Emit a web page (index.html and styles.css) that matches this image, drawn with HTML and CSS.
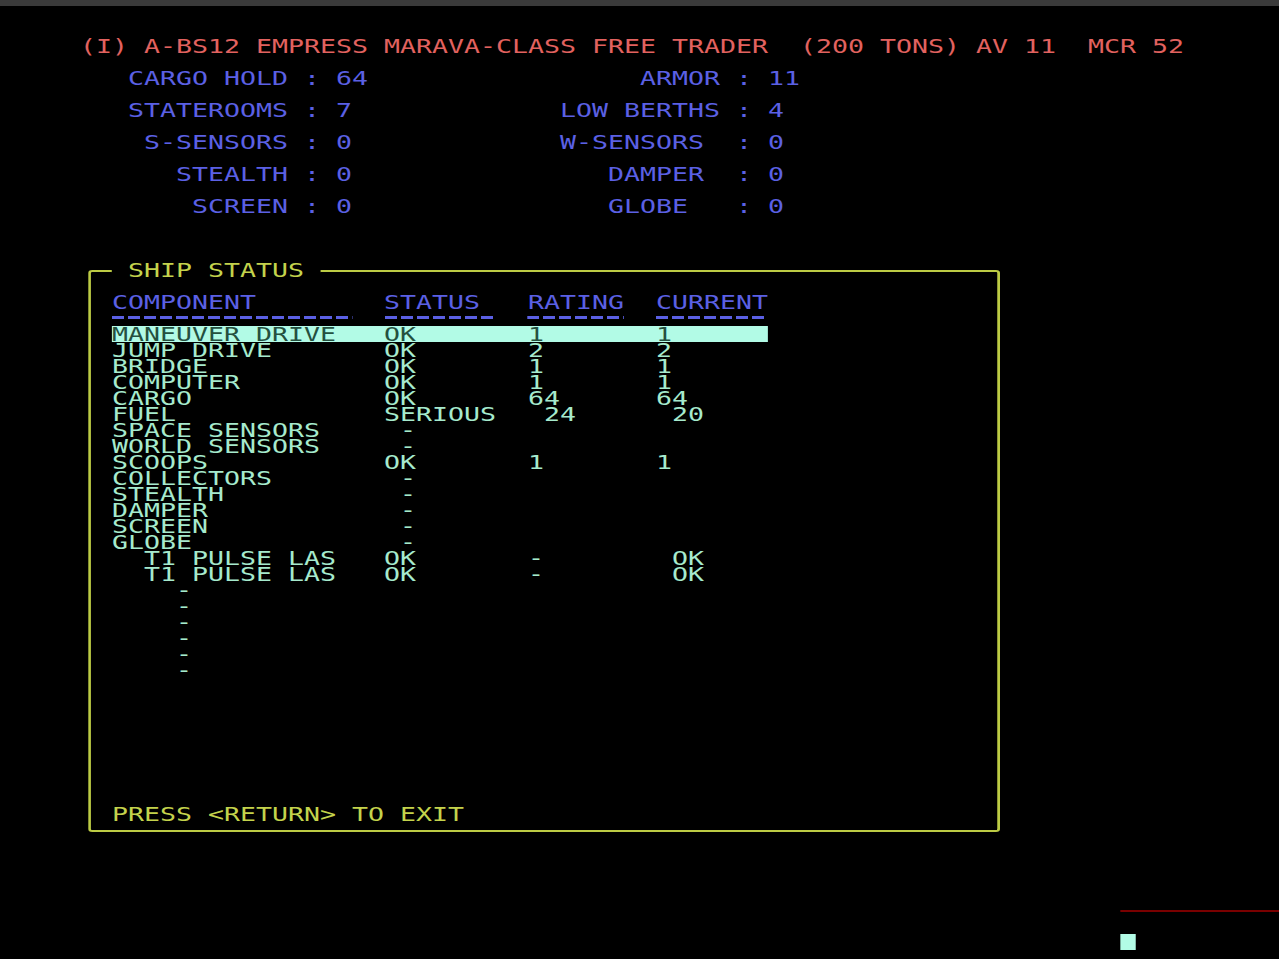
FILE: index.html
```html
<!DOCTYPE html>
<html lang="en">
<head>
<meta charset="utf-8">
<title>Ship Status</title>
<link rel="stylesheet" href="styles.css">
</head>
<body>
<div class="topbar"></div>
<main class="crt">
  <div class="line title">     (I) A-BS12 EMPRESS MARAVA-CLASS FREE TRADER  (200 TONS) AV 11  MCR 52</div>
  <section class="stats">
    <div class="line">        CARGO HOLD : 64                 ARMOR : 11</div>
    <div class="line">        STATEROOMS : 7             LOW BERTHS : 4</div>
    <div class="line">         S-SENSORS : 0             W-SENSORS  : 0</div>
    <div class="line">           STEALTH : 0                DAMPER  : 0</div>
    <div class="line">            SCREEN : 0                GLOBE   : 0</div>
  </section>

  <section class="box">
    <div class="box-head"><span class="box-title">SHIP STATUS</span></div>
    <div class="box-body">
      <div class="tbl">
        <div class="tr th"><span>COMPONENT</span><span>STATUS</span><span>RATING</span><span>CURRENT</span></div>
        <div class="tr rules"><span class="rule w15"></span><span class="rule w7"></span><span class="rule w6"></span><span class="rule w7"></span></div>
        <div class="tr sel"><span>MANEUVER DRIVE</span><span>OK</span><span>1</span><span>1</span></div>
        <div class="tr"><span>JUMP DRIVE</span><span>OK</span><span>2</span><span>2</span></div>
        <div class="tr"><span>BRIDGE</span><span>OK</span><span>1</span><span>1</span></div>
        <div class="tr"><span>COMPUTER</span><span>OK</span><span>1</span><span>1</span></div>
        <div class="tr"><span>CARGO</span><span>OK</span><span>64</span><span>64</span></div>
        <div class="tr"><span>FUEL</span><span>SERIOUS</span><span> 24</span><span> 20</span></div>
        <div class="tr"><span>SPACE SENSORS</span><span> -</span><span></span><span></span></div>
        <div class="tr"><span>WORLD SENSORS</span><span> -</span><span></span><span></span></div>
        <div class="tr"><span>SCOOPS</span><span>OK</span><span>1</span><span>1</span></div>
        <div class="tr"><span>COLLECTORS</span><span> -</span><span></span><span></span></div>
        <div class="tr"><span>STEALTH</span><span> -</span><span></span><span></span></div>
        <div class="tr"><span>DAMPER</span><span> -</span><span></span><span></span></div>
        <div class="tr"><span>SCREEN</span><span> -</span><span></span><span></span></div>
        <div class="tr"><span>GLOBE</span><span> -</span><span></span><span></span></div>
        <div class="tr"><span>  T1 PULSE LAS</span><span>OK</span><span>-</span><span> OK</span></div>
        <div class="tr"><span>  T1 PULSE LAS</span><span>OK</span><span>-</span><span> OK</span></div>
        <div class="tr"><span>    -</span><span></span><span></span><span></span></div>
        <div class="tr"><span>    -</span><span></span><span></span><span></span></div>
        <div class="tr"><span>    -</span><span></span><span></span><span></span></div>
        <div class="tr"><span>    -</span><span></span><span></span><span></span></div>
        <div class="tr"><span>    -</span><span></span><span></span><span></span></div>
        <div class="tr"><span>    -</span><span></span><span></span><span></span></div>
      </div>
      <div class="press">PRESS &lt;RETURN&gt; TO EXIT</div>
    </div>
  </section>

  <footer class="status">
    <div class="redline"></div>
    <div class="cursor"></div>
  </footer>
</main>
</body>
</html>
```

FILE: styles.css
```css
html, body {
  margin: 0;
  padding: 0;
  background: #000;
  overflow: hidden;
}

.topbar {
  height: 6px;
  background: #3a3a3a;
}

/* 80-column terminal; glyph cells widened to 16px like the emulator */
.crt {
  width: 80ch;
  font-family: "DejaVu Sans Mono", monospace;
  font-size: 19px;
  line-height: 16px;
  color: #a8ecd0;
  transform: scaleX(1.39868);
  transform-origin: 0 0;
}

.line,
.tr span,
.box-title,
.press {
  white-space: pre;
}

.line {
  height: 16px;
}

.title {
  margin-top: 32px;
  color: #e2625f;
}

.stats {
  color: #5b60e4;
}

.stats .line {
  margin-top: 16px;
}

/* ship status frame */
.box {
  width: 57ch;
  margin-top: 48px;
  margin-left: 5.5ch;
  color: #c4d34c;
}

.box-head {
  display: flex;
  height: 16px;
}

.box-head::before,
.box-head::after {
  content: "";
  box-sizing: border-box;
  height: 8px;
  margin-top: 8px;
  border-top: 2px solid #bccb44;
}

.box-head::before {
  width: 1.5ch;
  border-left: 2px solid #bccb44;
  border-top-left-radius: 3px;
}

.box-head::after {
  flex: 1;
  border-right: 2px solid #bccb44;
  border-top-right-radius: 3px;
}

.box-title {
  padding: 0 1ch;
}

.box-body {
  border: 2px solid #bccb44;
  border-top: none;
  border-radius: 0 0 3px 3px;
  padding: 16px 0 8px calc(1.5ch - 2px);
}

.tbl {
  display: flex;
  flex-direction: column;
}

.tr {
  display: grid;
  grid-template-columns: 17ch 9ch 8ch 7ch;
  width: 41ch;
  height: 16px;
  color: #a6eacd;
}

.th {
  color: #5b60e4;
}

.rule {
  display: block;
  height: 3px;
  margin-top: 6px;
  background: repeating-linear-gradient(to right, #5b60e4 0 0.75ch, transparent 0.75ch 1ch);
}

.w15 { width: 15ch; }
.w7 { width: 7ch; }
.w6 { width: 6ch; }

.sel {
  background: #b2fbe6;
  color: #24503f;
}

.press {
  margin-top: 128px;
  height: 16px;
  color: #c4d34c;
}

/* bottom-right status line and cursor */
.status {
  padding-left: 70ch;
  padding-top: 1px;
}

.redline {
  width: 10ch;
  height: 2px;
  margin-top: 77px;
  background: #7a0000;
}

.cursor {
  width: 1ch;
  height: 16px;
  margin-top: 22px;
  background: #b2fce6;
}
```
